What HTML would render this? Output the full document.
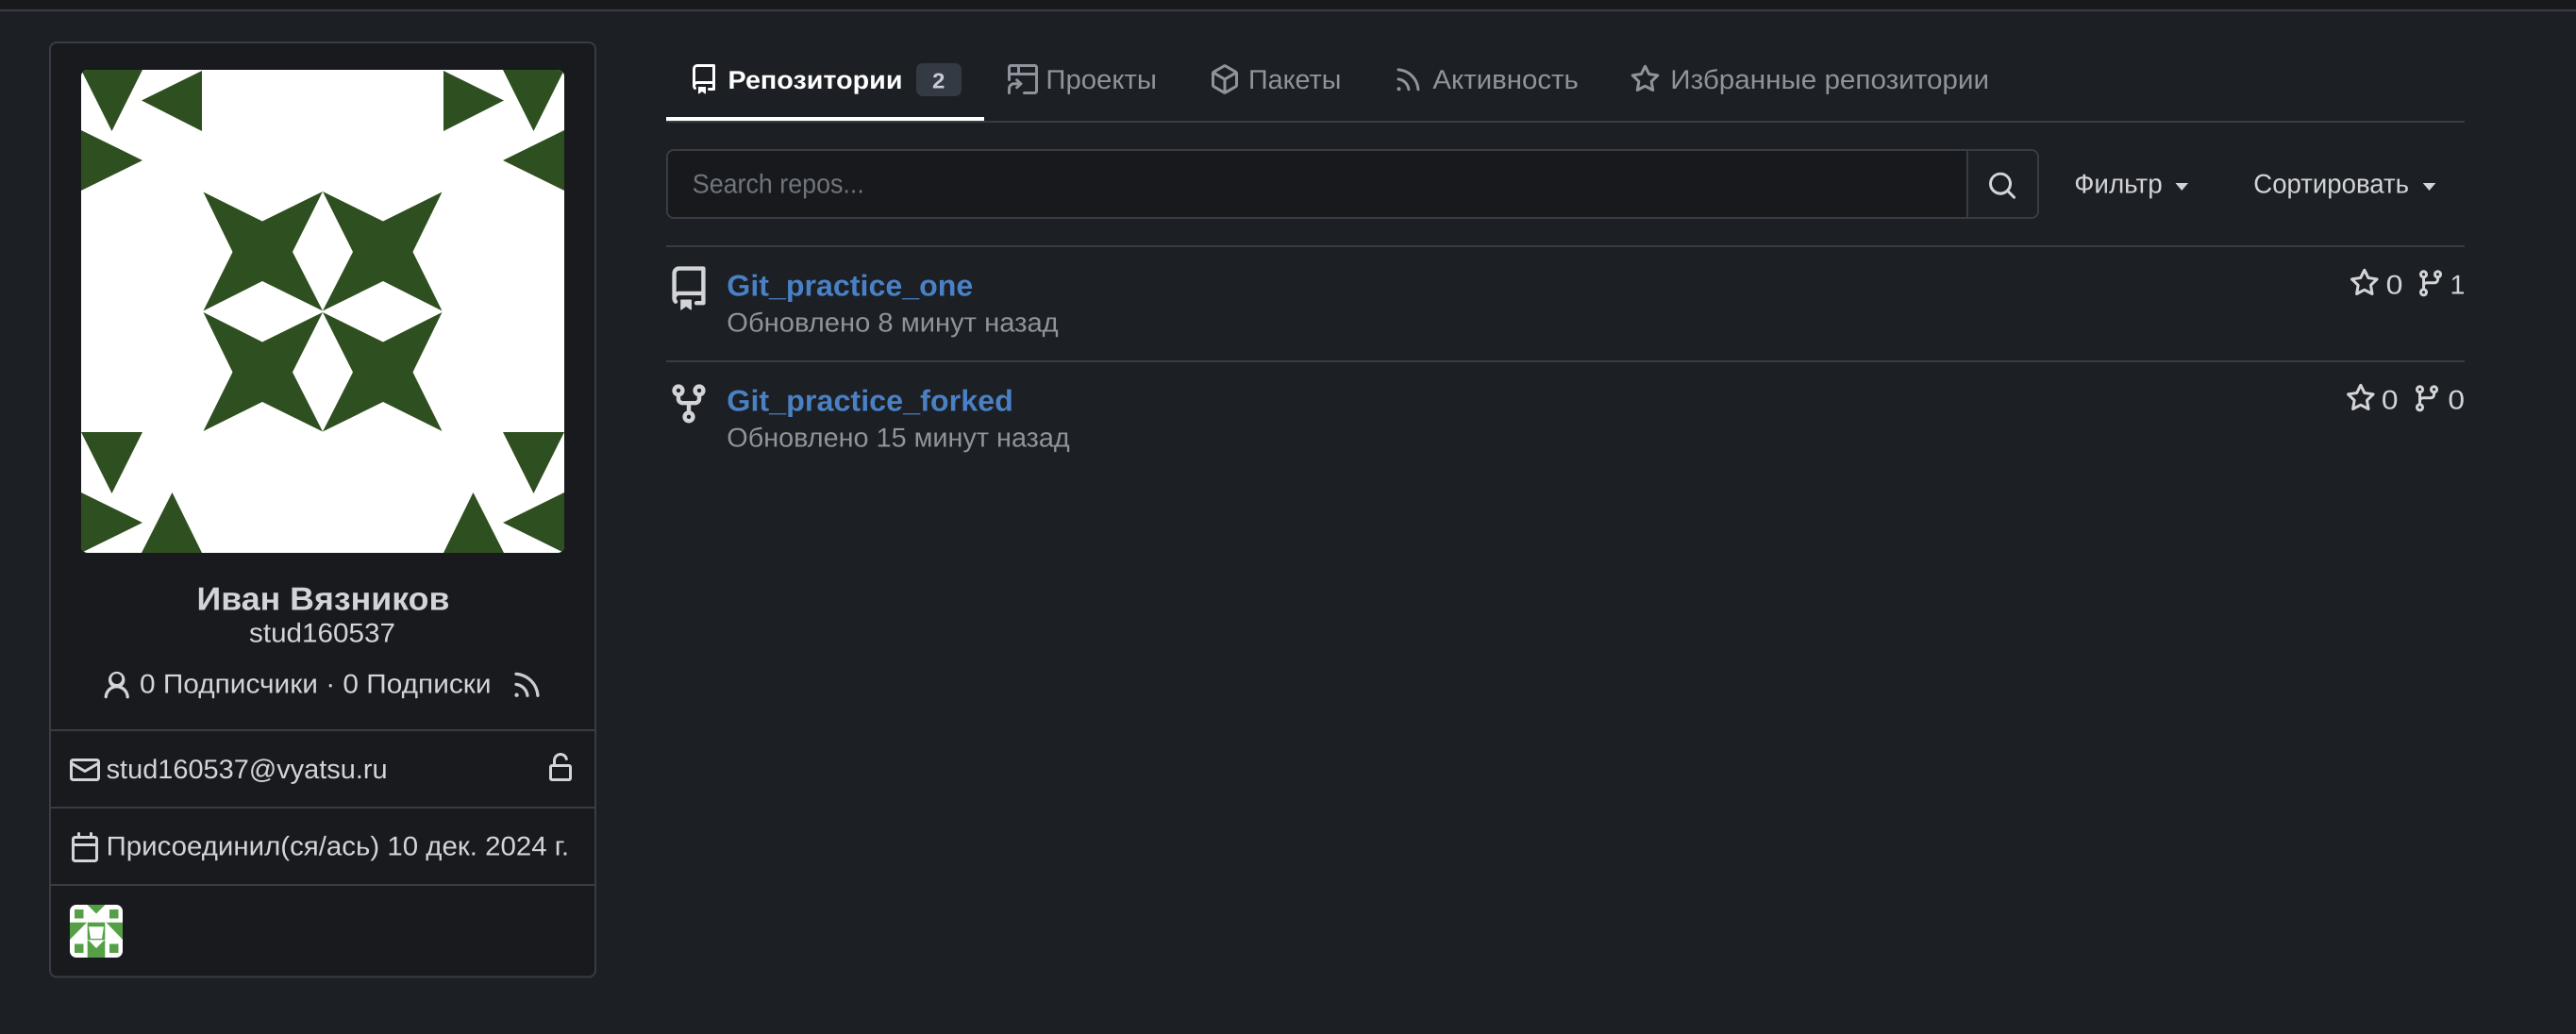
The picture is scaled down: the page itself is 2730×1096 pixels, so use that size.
<!DOCTYPE html>
<html lang="ru">
<head>
<meta charset="utf-8">
<title>stud160537</title>
<style>
html,body{margin:0;padding:0;background:#1c1f24;width:2730px;height:1096px;overflow:hidden}
svg{display:block}
text{font-family:"Liberation Sans","DejaVu Sans",sans-serif;white-space:pre}
.t{font-size:28.5px;fill:#d2d4d8}
.m{font-size:28.5px;fill:#8f949c}
.n{font-size:28.5px;fill:#8f949c}
.l{font-size:31.5px;font-weight:700;fill:#4a80c4}
</style>
</head>
<body>
<svg xmlns="http://www.w3.org/2000/svg" xmlns:xlink="http://www.w3.org/1999/xlink" width="2730" height="1096" viewBox="0 0 2730 1096" text-rendering="geometricPrecision">
<defs>
<path id="repo" d="M2 2.5A2.5 2.5 0 0 1 4.5 0h8.75a.75.75 0 0 1 .75.75v12.5a.75.75 0 0 1-.75.75h-2.5a.75.75 0 0 1 0-1.5h1.75v-2h-8a1 1 0 0 0-.714 1.7.75.75 0 1 1-1.072 1.05A2.5 2.5 0 0 1 2 11.5Zm10.5-1h-8a1 1 0 0 0-1 1v6.708A2.5 2.5 0 0 1 4.5 9h8ZM5 12.25a.25.25 0 0 1 .25-.25h3.5a.25.25 0 0 1 .25.25v3.25a.25.25 0 0 1-.4.2l-1.45-1.087a.249.249 0 0 0-.3 0L5.4 15.7a.25.25 0 0 1-.4-.2Z"/>
<path id="fork" d="M5 5.372v.878c0 .414.336.75.75.75h4.5a.75.75 0 0 0 .75-.75v-.878a2.25 2.25 0 1 1 1.5 0v.878a2.25 2.25 0 0 1-2.25 2.25h-1.5v2.128a2.251 2.251 0 1 1-1.5 0V8.5h-1.5A2.25 2.25 0 0 1 3.5 6.25v-.878a2.25 2.25 0 1 1 1.5 0ZM5 3.25a.75.75 0 1 0-1.5 0 .75.75 0 0 0 1.5 0Zm6.75.75a.75.75 0 1 0 0-1.5.75.75 0 0 0 0 1.5Zm-3 8.75a.75.75 0 1 0-1.5 0 .75.75 0 0 0 1.5 0Z"/>
<path id="branch" d="M9.5 3.25a2.25 2.25 0 1 1 3 2.122V6A2.5 2.5 0 0 1 10 8.5H6a1 1 0 0 0-1 1v1.128a2.251 2.251 0 1 1-1.5 0V5.372a2.25 2.25 0 1 1 1.5 0v1.836A2.493 2.493 0 0 1 6 7h4a1 1 0 0 0 1-1v-.628A2.25 2.25 0 0 1 9.5 3.25Zm-6 0a.75.75 0 1 0 1.5 0 .75.75 0 0 0-1.5 0Zm8.25-.75a.75.75 0 1 0 0 1.5.75.75 0 0 0 0-1.5ZM4.25 12a.75.75 0 1 0 0 1.5.75.75 0 0 0 0-1.5Z"/>
<path id="star" d="M8 .25a.75.75 0 0 1 .673.418l1.882 3.815 4.21.612a.75.75 0 0 1 .416 1.279l-3.046 2.97.719 4.192a.751.751 0 0 1-1.088.791L8 12.347l-3.766 1.98a.75.75 0 0 1-1.088-.79l.72-4.194L.818 6.374a.75.75 0 0 1 .416-1.28l4.21-.611L7.327.668A.75.75 0 0 1 8 .25Zm0 2.445L6.615 5.5a.75.75 0 0 1-.564.41l-3.097.45 2.24 2.184a.75.75 0 0 1 .216.664l-.528 3.084 2.769-1.456a.75.75 0 0 1 .698 0l2.77 1.456-.53-3.084a.75.75 0 0 1 .216-.664l2.24-2.183-3.096-.45a.75.75 0 0 1-.564-.41L8 2.694Z"/>
<path id="rss" d="M2.002 2.725a.75.75 0 0 1 .797-.699C8.79 2.42 13.58 7.21 13.974 13.201a.75.75 0 0 1-1.497.098 10.502 10.502 0 0 0-9.776-9.776.747.747 0 0 1-.7-.798ZM2.84 7.05h-.002a7.002 7.002 0 0 1 6.113 6.111.75.75 0 0 1-1.49.178 5.503 5.503 0 0 0-4.8-4.8.75.75 0 0 1 .179-1.489ZM2 13a1 1 0 1 1 2 0 1 1 0 0 1-2 0Z"/>
<clipPath id="av"><rect x="86" y="74" width="512" height="512" rx="7"/></clipPath>
<clipPath id="org"><rect x="74" y="959" width="56" height="56" rx="7"/></clipPath>
</defs>

<rect width="2730" height="1096" fill="#1c1f24"/>
<rect width="2730" height="10" fill="#17191d"/>
<rect y="10" width="2730" height="2" fill="#383c44"/>

<!-- Profile card -->
<rect x="53" y="45" width="578" height="990.5" rx="7" fill="#181a1e" stroke="#383c44" stroke-width="2"/>

<!-- Avatar -->
<g clip-path="url(#av)">
<rect x="86" y="74" width="512" height="512" fill="#ffffff"/>
<g fill="#2e4f1f">
<polygon points="86,74 151,74 118.5,139"/>
<polygon points="214,75 214,139 150,106.5"/>
<polygon points="86,138 86,202 151,170"/>
<polygon points="470,75 470,139 534,106.5"/>
<polygon points="533,74 598,74 565.5,139"/>
<polygon points="598,138 598,202 533,170"/>
<polygon points="86,458 151,458 118.5,523"/>
<polygon points="86,522 86,586 151,554"/>
<polygon points="150,586 214,586 182.5,522"/>
<polygon points="533,458 598,458 565.5,523"/>
<polygon points="598,522 598,586 533,554"/>
<polygon points="470,586 534,586 501.5,522"/>
<polygon points="215.5,203.5 278,234.5 342,203 310,267 342,329.5 278,298 215.5,329.5 246.5,267"/>
<polygon points="342,203 406,234.5 468.5,203.5 437.5,267 468.5,329.5 406,298 342,329.5 374,267"/>
<polygon points="215.5,331 278,362.5 342,331 310,394.5 342,457.5 278,426 215.5,457 246.5,394.5"/>
<polygon points="342,331 406,362.5 468.5,331 437.5,394.5 468.5,457 406,426 342,457.5 374,394.5"/>
</g>
</g>

<!-- Name -->
<text x="208.5" y="646.5" font-size="34.5" font-weight="700" fill="#d2d4d8" textLength="268" lengthAdjust="spacingAndGlyphs">Иван Вязников</text>
<text x="264" y="680.7" class="t" textLength="155" lengthAdjust="spacingAndGlyphs">stud160537</text>

<!-- Followers -->
<svg x="106.2" y="709.7" width="35" height="35" viewBox="0 0 16 16" fill="#d2d4d8"><path d="M10.561 8.073a6.005 6.005 0 0 1 3.432 5.142.75.75 0 1 1-1.498.07 4.5 4.5 0 0 0-8.99 0 .75.75 0 0 1-1.498-.07 6.004 6.004 0 0 1 3.431-5.142 3.999 3.999 0 1 1 5.123 0ZM10.5 4.5a2.5 2.5 0 1 0-5 0 2.5 2.5 0 0 0 5 0Z"/></svg>
<text x="148" y="734.7" class="t" textLength="372.5" lengthAdjust="spacingAndGlyphs">0 Подписчики · 0 Подписки</text>
<svg x="541" y="708.3" width="35" height="35" viewBox="0 0 16 16" fill="#c9ccd1"><use xlink:href="#rss" href="#rss"/></svg>

<!-- Card dividers -->
<rect x="54" y="773" width="576" height="2" fill="#383c44"/>
<rect x="54" y="855" width="576" height="2" fill="#383c44"/>
<rect x="54" y="937" width="576" height="2" fill="#383c44"/>

<!-- Email -->
<svg x="74" y="800" width="32" height="32" viewBox="0 0 16 16" fill="#d2d4d8"><path d="M1.75 2h12.5c.966 0 1.75.784 1.75 1.75v8.5A1.75 1.75 0 0 1 14.25 14H1.75A1.75 1.75 0 0 1 0 12.25v-8.5C0 2.784.784 2 1.75 2ZM1.5 12.251c0 .138.112.25.25.25h12.5a.25.25 0 0 0 .25-.25V5.809L8.38 9.397a.75.75 0 0 1-.76 0L1.5 5.809v6.442Zm13-8.181v-.32a.25.25 0 0 0-.25-.25H1.75a.25.25 0 0 0-.25.25v.32L8 7.88Z"/></svg>
<text x="112.6" y="825" class="t" textLength="298" lengthAdjust="spacingAndGlyphs">stud160537@vyatsu.ru</text>
<svg x="578" y="798" width="32" height="32" viewBox="0 0 16 16" fill="#d2d4d8"><path d="M5.5 4v2h7A1.5 1.5 0 0 1 14 7.5v6a1.5 1.5 0 0 1-1.5 1.5h-9A1.5 1.5 0 0 1 2 13.5v-6A1.5 1.5 0 0 1 3.5 6H4V4a4 4 0 0 1 7.883-.954.75.75 0 0 1-1.442.414A2.5 2.5 0 0 0 5.5 4ZM3.5 7.5v6h9v-6Z"/></svg>

<!-- Date -->
<svg x="74" y="882" width="32" height="32" viewBox="0 0 16 16" fill="#d2d4d8"><path d="M4.75 0a.75.75 0 0 1 .75.75V2h5V.75a.75.75 0 0 1 1.5 0V2h1.25c.966 0 1.75.784 1.75 1.75v10.5A1.75 1.75 0 0 1 13.25 16H2.75A1.75 1.75 0 0 1 1 14.25V3.75C1 2.784 1.784 2 2.75 2H4V.75A.75.75 0 0 1 4.75 0ZM2.5 7.5v6.75c0 .138.112.25.25.25h10.5a.25.25 0 0 0 .25-.25V7.5Zm10.75-4H2.75a.25.25 0 0 0-.25.25V6h11V3.75a.25.25 0 0 0-.25-.25Z"/></svg>
<text x="112.6" y="906.7" class="t" textLength="490.5" lengthAdjust="spacingAndGlyphs">Присоединил(ся/ась) 10 дек. 2024 г.</text>

<!-- Org avatar -->
<g clip-path="url(#org)">
<rect x="74" y="959" width="56" height="56" fill="#ffffff"/>
<g fill="#55a047">
<polygon points="92.5,959 111.5,959 102,968.5"/>
<rect x="79" y="964" width="9.5" height="9.5"/>
<rect x="116" y="964" width="9.5" height="9.5"/>
<rect x="79" y="1000.5" width="9.5" height="9.5"/>
<rect x="116" y="1000.5" width="9.5" height="9.5"/>
<polygon points="74,977.7 92,977.7 74,996"/>
<polygon points="130,977.7 112.5,977.7 130,996"/>
<rect x="92.7" y="977.7" width="18.6" height="18.6"/>
<rect x="92.7" y="997" width="18.6" height="18"/>
</g>
<polygon points="94,982.3 110,982.3 108,995 96,995" fill="#ffffff"/>
<polygon points="94.3,997 110,997 102,1005" fill="#ffffff"/>
</g>

<!-- Tabs -->
<svg x="730" y="68" width="32" height="32" viewBox="0 0 16 16" fill="#ffffff"><use xlink:href="#repo" href="#repo"/></svg>
<text x="771.5" y="94" font-size="27" font-weight="700" fill="#ffffff" textLength="185" lengthAdjust="spacingAndGlyphs">Репозитории</text>
<rect x="971" y="67" width="48" height="35" rx="7" fill="#343a43"/>
<text x="988" y="93.3" font-size="23" font-weight="700" fill="#c9ccd1" textLength="13.4" lengthAdjust="spacingAndGlyphs">2</text>

<svg x="1068" y="68" width="32" height="32" viewBox="0 0 16 16" fill="#8f949c"><path d="M0 1.75C0 .784.784 0 1.75 0h12.5C15.216 0 16 .784 16 1.75v12.5A1.75 1.75 0 0 1 14.25 16H8.75a.75.75 0 0 1 0-1.5h5.5a.25.25 0 0 0 .25-.25V6h-13v2.25a.75.75 0 0 1-1.5 0ZM6.5 1.5v3h8V1.75a.25.25 0 0 0-.25-.25ZM5 4.5v-3H1.75a.25.25 0 0 0-.25.25V4.5Z"/><path d="M.75 15.25V13a2.6 2.6 0 0 1 2.6-2.6H6.6M4.8 8.4l2.2 2-2.2 2" fill="none" stroke="#8f949c" stroke-width="1.5" stroke-linecap="round" stroke-linejoin="round"/></svg>
<text x="1108.4" y="94" class="n" textLength="117.6" lengthAdjust="spacingAndGlyphs">Проекты</text>

<svg x="1282" y="68" width="32" height="32" viewBox="0 0 16 16" fill="#8f949c"><path fill-rule="evenodd" d="M8.878.392a1.75 1.75 0 0 0-1.756 0l-5.25 3.045A1.75 1.75 0 0 0 1 4.951v6.098c0 .624.332 1.2.872 1.514l5.25 3.045a1.75 1.75 0 0 0 1.756 0l5.25-3.045c.54-.313.872-.89.872-1.514V4.951c0-.624-.332-1.2-.872-1.514ZM7.875 1.69a.25.25 0 0 1 .25 0l4.63 2.685L8 7.133 3.245 4.375ZM2.5 5.677v5.372c0 .09.047.171.125.216l4.625 2.683V8.432Zm6.25 8.271 4.625-2.683a.25.25 0 0 0 .125-.216V5.677L8.75 8.432Z"/></svg>
<text x="1323" y="94" class="n" textLength="98.4" lengthAdjust="spacingAndGlyphs">Пакеты</text>

<svg x="1476.5" y="68.3" width="32" height="32" viewBox="0 0 16 16" fill="#8f949c"><use xlink:href="#rss" href="#rss"/></svg>
<text x="1518.4" y="94" class="n" textLength="154.5" lengthAdjust="spacingAndGlyphs">Активность</text>

<svg x="1727.5" y="68.2" width="32" height="32" viewBox="0 0 16 16" fill="#8f949c"><use xlink:href="#star" href="#star"/></svg>
<text x="1770.3" y="94" class="n" textLength="337.7" lengthAdjust="spacingAndGlyphs">Избранные репозитории</text>

<rect x="706" y="128" width="1906" height="2" fill="#383c44"/>
<rect x="706" y="124" width="337" height="4" fill="#ffffff"/>

<!-- Search -->
<path d="M714 159H2085V231H714a7 7 0 0 1-7-7V166a7 7 0 0 1 7-7Z" fill="#18191d"/>
<rect x="707" y="159" width="1453" height="72" rx="7" fill="none" stroke="#383c44" stroke-width="2"/>
<rect x="2084" y="159" width="2" height="72" fill="#383c44"/>
<text x="733.8" y="204.7" font-size="28.5" fill="#6f757d" textLength="182" lengthAdjust="spacingAndGlyphs">Search repos...</text>
<svg x="2106" y="180.7" width="32" height="32" viewBox="0 0 16 16" fill="#d2d4d8"><path d="M10.68 11.74a6 6 0 0 1-7.922-8.982 6 6 0 0 1 8.982 7.922l3.04 3.04a.749.749 0 0 1-.326 1.275.749.749 0 0 1-.734-.215ZM11.5 7a4.499 4.499 0 1 0-8.997 0A4.499 4.499 0 0 0 11.5 7Z"/></svg>

<text x="2198.3" y="204.4" class="t" textLength="93.4" lengthAdjust="spacingAndGlyphs">Фильтр</text>
<polygon points="2305.5,194 2319,194 2312.2,202" fill="#d2d4d8"/>
<text x="2388.3" y="204.4" class="t" textLength="164.7" lengthAdjust="spacingAndGlyphs">Сортировать</text>
<polygon points="2567.7,194 2581.3,194 2574.5,202" fill="#d2d4d8"/>

<!-- Repo list -->
<rect x="706" y="260" width="1906" height="2" fill="#383c44"/>
<rect x="706" y="382" width="1906" height="2" fill="#383c44"/>

<svg x="706.5" y="282.3" width="47" height="47" viewBox="0 0 16 16" fill="#d2d4d8"><use xlink:href="#repo" href="#repo"/></svg>
<text x="770.3" y="313.3" class="l" textLength="261" lengthAdjust="spacingAndGlyphs">Git_practice_one</text>
<text x="770.3" y="351.7" class="m" textLength="351.4" lengthAdjust="spacingAndGlyphs">Обновлено 8 минут назад</text>

<svg x="706.5" y="404.4" width="47" height="47" viewBox="0 0 16 16" fill="#d2d4d8"><use xlink:href="#fork" href="#fork"/></svg>
<text x="770.3" y="435.3" class="l" textLength="303.6" lengthAdjust="spacingAndGlyphs">Git_practice_forked</text>
<text x="770.3" y="473.7" class="m" textLength="363.4" lengthAdjust="spacingAndGlyphs">Обновлено 15 минут назад</text>

<!-- Stats row 1 -->
<svg x="2489.8" y="284.2" width="32" height="32" viewBox="0 0 16 16" fill="#d2d4d8"><use xlink:href="#star" href="#star"/></svg>
<text x="2528.6" y="311.7" class="t" textLength="17.8" lengthAdjust="spacingAndGlyphs">0</text>
<svg x="2560" y="284.3" width="32" height="32" viewBox="0 0 16 16" fill="#d2d4d8"><use xlink:href="#branch" href="#branch"/></svg>
<text x="2596.5" y="311.7" class="t">1</text>

<!-- Stats row 2 -->
<svg x="2485.8" y="406.2" width="32" height="32" viewBox="0 0 16 16" fill="#d2d4d8"><use xlink:href="#star" href="#star"/></svg>
<text x="2523.9" y="433.7" class="t" textLength="17.6" lengthAdjust="spacingAndGlyphs">0</text>
<svg x="2556" y="406.3" width="32" height="32" viewBox="0 0 16 16" fill="#d2d4d8"><use xlink:href="#branch" href="#branch"/></svg>
<text x="2594.4" y="433.7" class="t" textLength="17.6" lengthAdjust="spacingAndGlyphs">0</text>
</svg>
</body>
</html>
